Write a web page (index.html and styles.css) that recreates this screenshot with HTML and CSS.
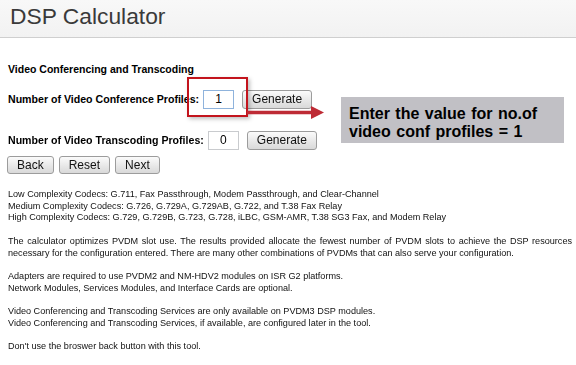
FILE: index.html
```html
<!DOCTYPE html>
<html lang="en">
<head>
    <meta charset="UTF-8">
    <meta name="viewport" content="width=device-width, initial-scale=1.0">
    <title>DSP Calculator</title>
    <link rel="stylesheet" href="styles.css">
</head>
<body>
    <header class="page-header">
        <h1 class="page-title">DSP Calculator</h1>
    </header>

    <section class="calc">
        <h3 class="calc-title">Video Conferencing and Transcoding</h3>

        <div class="profile-row row-conf">
            <label for="conf-count">Number of Video Conference Profiles:</label>
            <input id="conf-count" class="count-input focused" type="text" value="1" autofocus>
            <button class="btn btn-gen">Generate</button>
        </div>

        <div class="profile-row row-trans">
            <label for="trans-count">Number of Video Transcoding Profiles:</label>
            <input id="trans-count" class="count-input" type="text" value="0">
            <button class="btn btn-gen">Generate</button>
        </div>

        <div class="nav-buttons">
            <button class="btn btn-nav">Back</button>
            <button class="btn btn-nav">Reset</button>
            <button class="btn btn-nav">Next</button>
        </div>

        <div class="notes">
            <p>Low Complexity Codecs: G.711, Fax Passthrough, Modem Passthrough, and Clear-Channel<br>
            Medium Complexity Codecs: G.726, G.729A, G.729AB, G.722, and T.38 Fax Relay<br>
            High Complexity Codecs: G.729, G.729B, G.723, G.728, iLBC, GSM-AMR, T.38 SG3 Fax, and Modem Relay</p>

            <p class="justified">The calculator optimizes PVDM slot use. The results provided allocate the fewest number of PVDM slots to achieve the DSP resources necessary for the configuration entered. There are many other combinations of PVDMs that can also serve your configuration.</p>

            <p>Adapters are required to use PVDM2 and NM-HDV2 modules on ISR G2 platforms.<br>
            Network Modules, Services Modules, and Interface Cards are optional.</p>

            <p>Video Conferencing and Transcoding Services are only available on PVDM3 DSP modules.<br>
            Video Conferencing and Transcoding Services, if available, are configured later in the tool.</p>

            <p>Don't use the broswer back button with this tool.</p>
        </div>
    </section>

    <!-- annotation drawn over the page -->
    <div class="mark-box"></div>
    <svg class="mark-arrow" width="78" height="18" viewBox="0 0 78 18">
        <line x1="0" y1="8.5" x2="66" y2="8.5" stroke="#be2b35" stroke-width="3.5"/>
        <polygon points="64,2 77,8.5 64,15" fill="#be2b35"/>
    </svg>
    <div class="callout">Enter the value for no.of<br>video conf profiles = 1</div>
</body>
</html>
```

FILE: styles.css
```css
* {
    margin: 0;
    padding: 0;
    box-sizing: border-box;
}

body {
    position: relative;
    background-color: #fff;
    font-family: 'Liberation Sans', Arial, sans-serif;
    color: #000;
    width: 576px;
    height: 365px;
    overflow: hidden;
}


/* header */

.page-header {
    height: 38px;
    padding: 3px 0 0 10px;
    background: linear-gradient(#f8f8f8, #f2f2f2);
    border-bottom: 1px solid #cfcfcf;
}

.page-title {
    font-size: 22.8px;
    line-height: 26px;
    font-weight: normal;
    color: #3a3a3a;
}


/* calculator form */

.calc {
    padding-left: 8px;
}

.calc-title {
    margin-top: 25px;
    font-size: 10.5px;
    line-height: 13px;
    font-weight: bold;
}

.profile-row {
    display: flex;
    align-items: center;
    height: 20px;
}

.row-conf {
    margin-top: 13px;
}

.row-trans {
    margin-top: 21px;
}

.profile-row label {
    font-size: 10.6px;
    font-weight: bold;
    margin-right: 4px;
}

.count-input {
    width: 31px;
    height: 19px;
    border: 1px solid #c9cbce;
    font-family: 'Liberation Sans', Arial, sans-serif;
    font-size: 12px;
    text-align: center;
    color: #000;
    caret-color: #000;
    outline: none;
}

.count-input.focused {
    border-color: #8fb3dc;
}

.btn {
    height: 19px;
    border: 1px solid #9c9c9c;
    border-radius: 3px;
    background: linear-gradient(#fbfbfb, #e6e6e6 60%, #d9d9d9);
    font-family: 'Liberation Sans', Arial, sans-serif;
    font-size: 12px;
    color: #111;
}

.btn-gen {
    width: 70px;
    margin-left: 8px;
}

.nav-buttons {
    display: flex;
    gap: 5px;
    margin-top: 6px;
    margin-left: -1px;
}

.btn-nav {
    height: 18px;
    padding: 0 9px;
}


/* notes */

.notes {
    width: 564px;
    margin-top: 15px;
}

.notes p {
    font-size: 9.1px;
    line-height: 11.7px;
    margin-bottom: 11.7px;
    color: #111;
}

.notes p.justified {
    text-align: justify;
}


/* annotation */

.mark-box {
    position: absolute;
    left: 187px;
    top: 77px;
    width: 61px;
    height: 40px;
    border: 2px solid #c3141d;
    box-shadow: 2px 2px 4px rgba(0, 0, 0, .25);
}

.mark-arrow {
    position: absolute;
    left: 247px;
    top: 104px;
}

.callout {
    position: absolute;
    left: 341px;
    top: 97px;
    width: 223px;
    height: 46px;
    padding: 8px 0 0 8px;
    background-color: #c1c0c5;
    font-size: 16px;
    line-height: 18px;
    font-weight: bold;
    word-spacing: 1px;
    color: #000;
}
```
